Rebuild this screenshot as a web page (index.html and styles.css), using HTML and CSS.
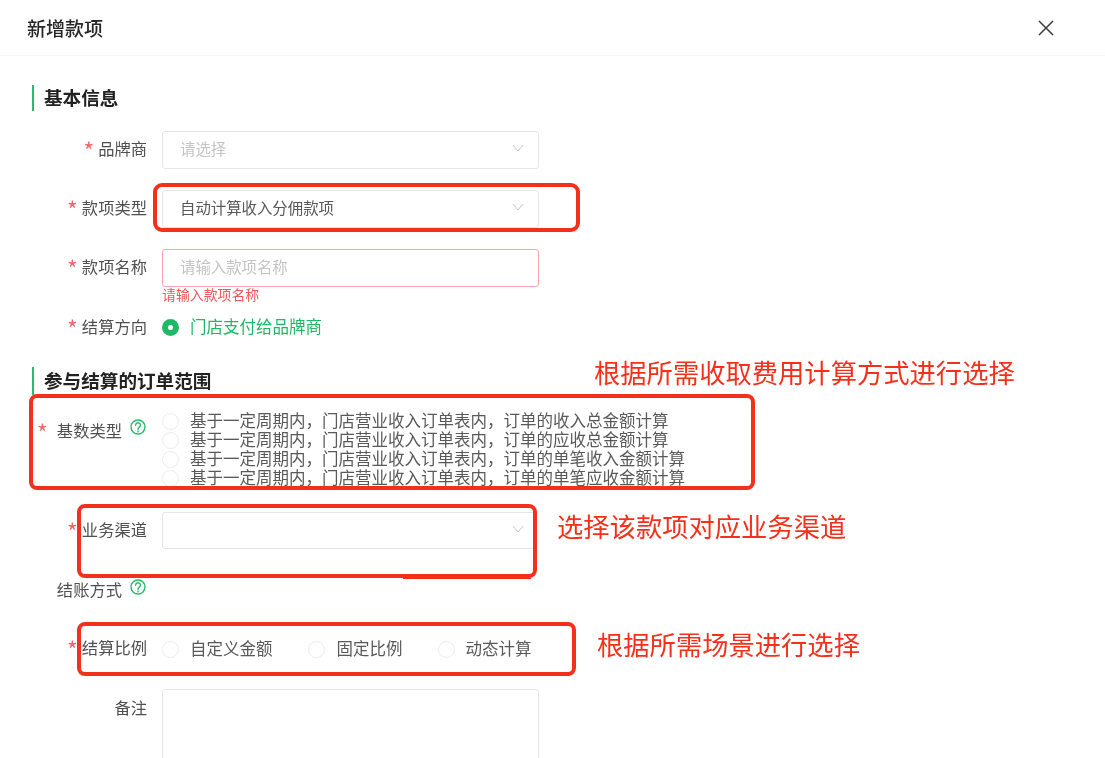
FILE: index.html
```html
<!DOCTYPE html>
<html lang="zh-CN">
<head>
<meta charset="utf-8">
<title>新增款项</title>
<link rel="stylesheet" href="styles.css">
</head>
<body>
<div class="page">
  <header class="header">
    <h1 class="title">新增款项</h1>
    <svg class="close" viewBox="0 0 16 16" width="16" height="16"><path d="M1 1L15 15M15 1L1 15"/></svg>
  </header>

  <form class="form">
    <h2 class="section first">基本信息</h2>

    <div class="row r-brand">
      <div class="label"><span class="star">*</span>品牌商</div>
      <div class="control select"><span class="placeholder">请选择</span><svg class="chev" viewBox="0 0 12 8" width="12" height="8"><path d="M1 1L6 7L11 1"/></svg></div>
    </div>
    <div class="row r-type">
      <div class="label"><span class="star">*</span>款项类型</div>
      <div class="control select"><span class="value">自动计算收入分佣款项</span><svg class="chev" viewBox="0 0 12 8" width="12" height="8"><path d="M1 1L6 7L11 1"/></svg></div>
    </div>
    <div class="row r-name">
      <div class="label"><span class="star">*</span>款项名称</div>
      <div class="field">
        <div class="control error"><span class="placeholder">请输入款项名称</span></div>
        <div class="error-text">请输入款项名称</div>
      </div>
    </div>
    <div class="row r-dir">
      <div class="label"><span class="star">*</span>结算方向</div>
      <div class="radio-line">
        <span class="radio checked"></span><span class="radio-text green">门店支付给品牌商</span>
      </div>
    </div>

    <h2 class="section second">参与结算的订单范围</h2>

    <div class="row r-base">
      <div class="label label-help"><span class="star star-far">*</span>基数类型<svg class="help" viewBox="0 0 16 16" width="16" height="16"><circle cx="8" cy="8" r="7"/><path d="M5.6 6.2a2.4 2.4 0 1 1 3.7 2c-.9.5-1.3 1-1.3 2"/><path class="dot" d="M8 12v.8"/></svg></div>
      <div class="stack">
        <div class="radio-line tight"><span class="radio"></span><span class="radio-text">基于一定周期内，门店营业收入订单表内，订单的收入总金额计算</span></div>
        <div class="radio-line tight"><span class="radio"></span><span class="radio-text">基于一定周期内，门店营业收入订单表内，订单的应收总金额计算</span></div>
        <div class="radio-line tight"><span class="radio"></span><span class="radio-text">基于一定周期内，门店营业收入订单表内，订单的单笔收入金额计算</span></div>
        <div class="radio-line tight"><span class="radio"></span><span class="radio-text">基于一定周期内，门店营业收入订单表内，订单的单笔应收金额计算</span></div>
      </div>
    </div>

    <div class="row r-channel">
      <div class="label"><span class="star">*</span>业务渠道</div>
      <div class="control select short"><svg class="chev" viewBox="0 0 12 8" width="12" height="8"><path d="M1 1L6 7L11 1"/></svg></div>
    </div>

    <div class="row r-pay">
      <div class="label label-help">结账方式<svg class="help up" viewBox="0 0 16 16" width="16" height="16"><circle cx="8" cy="8" r="7"/><path d="M5.6 6.2a2.4 2.4 0 1 1 3.7 2c-.9.5-1.3 1-1.3 2"/><path class="dot" d="M8 12v.8"/></svg></div>
    </div>

    <div class="row r-ratio">
      <div class="label"><span class="star">*</span>结算比例</div>
      <div class="radio-line inline">
        <span class="radio"></span><span class="radio-text opt-a">自定义金额</span>
        <span class="radio"></span><span class="radio-text opt-b">固定比例</span>
        <span class="radio"></span><span class="radio-text">动态计算</span>
      </div>
    </div>

    <div class="row r-note">
      <div class="label">备注</div>
      <div class="textarea"></div>
    </div>
  </form>

  <div class="mark m1"></div>
  <div class="mark m2"></div>
  <div class="mark m3"></div>
  <div class="mark m4"></div>
  <div class="note n1">根据所需收取费用计算方式进行选择</div>
  <div class="note n2">选择该款项对应业务渠道</div>
  <div class="note n3">根据所需场景进行选择</div>
</div>
</body>
</html>
```

FILE: styles.css
```css
* { box-sizing: border-box; }
html, body { margin: 0; padding: 0; background: #fff; }
body { font-family: "Noto Sans CJK SC", "Noto Sans", sans-serif; }
.page { position: relative; width: 1105px; height: 758px; overflow: hidden; background: #fff; filter: blur(0.35px); }

.header { height: 56px; display: flex; align-items: center; justify-content: space-between; padding: 0 51px 0 27px; border-bottom: 1px solid #f6f6f6; }
.title { margin: 0; font-size: 19px; font-weight: 500; color: #262626; line-height: 26px; }
.close { fill: none; stroke: #3c3c3c; stroke-width: 1.5; }

.form { padding: 0 0 0 32px; }
.section { margin: 0; padding-left: 10px; border-left: 2px solid #2cbb6a; height: 26px; line-height: 24px; font-size: 18.6px; font-weight: 700; color: #222; }
.section.first { margin-top: 29px; }
.section.second { margin-top: 22px; height: 28px; line-height: 25px; }

.row { display: flex; margin-left: -32px; }
.label { width: 147px; flex: none; display: flex; justify-content: flex-end; align-items: center; font-size: 16.3px; color: #505050; height: 38px; margin-right: 15px; padding-bottom: 4px; }
.star { color: #f5636b; margin-right: 4px; margin-top: 4px; font-size: 23px; line-height: 16px; height: 16px; }
.star-far { margin-right: 9px; }
.label-help { padding-right: 1px; }
.help { margin-left: 8px; fill: none; stroke: #27b96a; stroke-width: 1.4; stroke-linecap: round; position: relative; top: -3px; flex: none; }
.help.up { top: -2px; }

.control { width: 377px; height: 38px; border: 1px solid #e6e6e6; border-radius: 3px; display: flex; align-items: center; justify-content: space-between; padding: 0 14px 4px 17px; font-size: 15.4px; background: #fff; }
.control.error { border-color: #f9a3aa; }
.placeholder { color: #c4c4c4; }
.value { color: #595959; }
.chev { fill: none; stroke: #c6c6c6; stroke-width: 1; margin-left: auto; }
.short { height: 37px; }

.r-brand { margin-top: 20px; }
.r-type { margin-top: 21px; }
.r-name { margin-top: 21px; }
.error-text { font-size: 13.9px; line-height: 18px; color: #f4565c; margin-top: -2px; }
.r-dir { margin-top: 6px; }
.r-dir .label { height: 36px; padding-bottom: 2px; }
.radio-line { display: flex; align-items: center; height: 36px; }
.radio { width: 17px; height: 17px; border: 1px solid #ececec; border-radius: 50%; flex: none; background: #fff; margin-right: 11px; }
.radio.checked { border: 6px solid #1fb865; background: #fff; }
.radio-text { font-size: 16.5px; color: #595959; line-height: 19px; white-space: nowrap; margin-bottom: 2px; }
.green { color: #1fb865; }

.r-base { margin-top: 10px; }
.r-base .label { height: 38px; margin-top: 8px; }
.stack { padding-top: 7px; height: 76px; }
.tight { height: 19px; }
.r-channel { margin-top: 31px; }
.r-channel .label { height: 37px; }
.r-pay { margin-top: 23px; }
.r-pay .label { height: 38px; }
.r-ratio { margin-top: 20px; }
.r-ratio .label { height: 38px; }
.inline { height: 38px; }
.opt-a { margin-right: 35px; }
.opt-b { margin-left: 1px; margin-right: 35px; }
.r-note { margin-top: 21px; }
.r-note .label { height: 38px; margin-top: 1px; }
.textarea { width: 377px; height: 100px; border: 1px solid #e6e6e6; border-radius: 3px; background: #fff; }

.mark { position: absolute; border: 4px solid #f5301a; border-radius: 8px; }
.m1 { left: 153px; top: 183px; width: 427px; height: 49px; border-radius: 9px; }
.m2 { left: 29px; top: 394px; width: 726px; height: 96px; }
.m3 { left: 77px; top: 504px; width: 460px; height: 74px; box-shadow: 4px 0 0 #fff; }
.m3::after { content: ""; position: absolute; left: 322px; right: 2px; bottom: -5px; height: 1px; background: #f5301a; }
.m4 { left: 77px; top: 622px; width: 499px; height: 54px; }

.note { position: absolute; font-size: 26.3px; line-height: 36px; color: #f5301a; white-space: nowrap; }
.n1 { left: 594px; top: 354px; }
.n2 { left: 557px; top: 508px; }
.n3 { left: 597px; top: 626px; }
```
